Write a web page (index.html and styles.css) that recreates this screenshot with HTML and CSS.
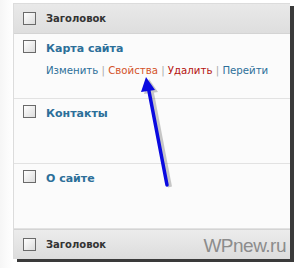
FILE: index.html
```html
<!DOCTYPE html>
<html lang="ru">
<head>
  <meta charset="UTF-8">
  <title>Страницы</title>
  <link rel="stylesheet" href="styles.css">
</head>
<body>
  <div class="shot">
    <div class="panel">
      <div class="head">
        <span class="check"></span>
        <span class="col-title">Заголовок</span>
      </div>

      <div class="row">
        <span class="check"></span>
        <div class="cell">
          <a class="title" href="#">Карта сайта</a>
          <div class="actions">
            <a href="#">Изменить</a> <span class="sep">|</span>
            <a class="props" href="#">Свойства</a> <span class="sep">|</span>
            <a class="del" href="#">Удалить</a> <span class="sep">|</span>
            <a href="#">Перейти</a>
          </div>
        </div>
      </div>

      <div class="row">
        <span class="check"></span>
        <div class="cell">
          <a class="title" href="#">Контакты</a>
        </div>
      </div>

      <div class="row">
        <span class="check"></span>
        <div class="cell">
          <a class="title" href="#">О сайте</a>
        </div>
      </div>

      <div class="head foot">
        <span class="check"></span>
        <span class="col-title">Заголовок</span>
        <span class="mark">WPnew.ru</span>
      </div>
    </div>

    <!-- стрелка поверх таблицы -->
    <svg class="arrow" width="294" height="268" viewBox="0 0 294 268">
      <g opacity="0.35" transform="translate(3,2)">
        <line x1="148" y1="86" x2="167" y2="185" stroke="#666" stroke-width="4"/>
        <polygon points="146,77 155,90 141,92" fill="#666"/>
      </g>
      <line x1="148" y1="86" x2="167" y2="185" stroke="#0a0ae0" stroke-width="3.5" stroke-linecap="round"/>
      <polygon points="146,77 155,90 141,92" fill="#0a0ae0"/>
    </svg>
  </div>
</body>
</html>
```

FILE: styles.css
```css
body {
  margin: 0;
  background: #fff;
  font-family: "DejaVu Sans", Verdana, sans-serif;
}
.shot {
  position: relative;
  width: 294px;
  height: 268px;
  padding: 3px 0 0 13px;
  box-sizing: border-box;
  background: linear-gradient(to right, #f6f6f6, #fff 13px);
}
.panel {
  width: 276px;
  border: 1px solid #dcdcdc;
  border-right: none;
  background: #fbfbfb;
  box-shadow: 4px 3px 0 #3a3a3a;
}
.head {
  position: relative;
  display: flex;
  align-items: center;
  height: 29px;
  padding-left: 9px;
  background: linear-gradient(to bottom, #e9e9e9, #dedede);
  border-bottom: 1px solid #d4d4d4;
}
.foot {
  height: 28px;
  border-bottom: none;
  border-top: 1px solid #d4d4d4;
  background: linear-gradient(to bottom, #ececec, #dddddd);
}
.check {
  flex: none;
  width: 11px;
  height: 11px;
  border: 1px solid #6a6a6a;
  background: linear-gradient(135deg, #fff, #dcdcdc);
  margin-right: 10px;
}
.col-title {
  font-size: 10px;
  font-weight: bold;
  color: #333;
}
.row {
  display: flex;
  align-items: flex-start;
  height: 58px;
  padding: 6px 0 0 9px;
  border-bottom: 1px solid #e2e2e2;
}
.row:last-of-type {
  border-bottom: none;
}
.cell {
  line-height: 13px;
}
.title {
  font-size: 11px;
  font-weight: bold;
  color: #2c6f99;
  text-decoration: none;
}
.actions {
  margin-top: 9px;
  font-size: 10.2px;
  color: #999;
  white-space: nowrap;
}
.actions a {
  color: #2c6f99;
  text-decoration: none;
}
.actions .props {
  color: #d4532a;
}
.actions .del {
  color: #b5130f;
}
.sep {
  color: #aaa;
}
.mark {
  position: absolute;
  right: 4px;
  top: 5px;
  font-family: "Liberation Sans", Arial, sans-serif;
  font-size: 19px;
  color: #8c8c8c;
  letter-spacing: -0.5px;
}
.arrow {
  position: absolute;
  left: 0;
  top: 0;
  pointer-events: none;
}
```
